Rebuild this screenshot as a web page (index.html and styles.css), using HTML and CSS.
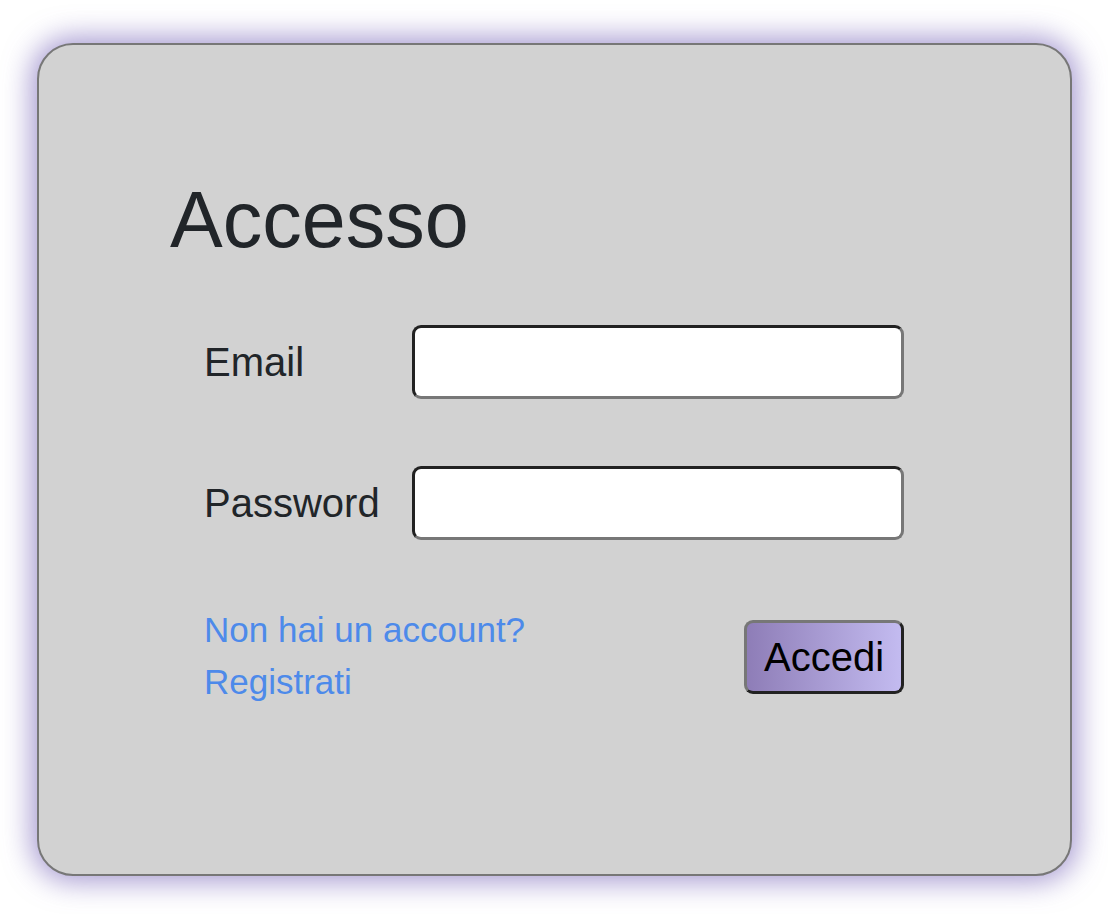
FILE: index.html
```html
<!DOCTYPE html>
<html lang="it">
<head>
<meta charset="utf-8">
<title>Accesso</title>
<link rel="stylesheet" href="styles.css">
</head>
<body>
<div class="card">
  <h1 class="title">Accesso</h1>
  <form class="form">
    <div class="row">
      <label class="label" for="email">Email</label>
      <input class="field" id="email" type="email">
    </div>
    <div class="row row-second">
      <label class="label" for="pw">Password</label>
      <input class="field" id="pw" type="password">
    </div>
    <div class="actions">
      <div class="links">
        <a class="link" href="#">Non hai un account?</a>
        <a class="link" href="#">Registrati</a>
      </div>
      <button class="btn" type="button">Accedi</button>
    </div>
  </form>
</div>
</body>
</html>
```

FILE: styles.css
```css
* { box-sizing: border-box; }
html, body { margin: 0; padding: 0; background: #ffffff; }
body {
  font-family: "Liberation Sans", Arial, sans-serif;
  color: #212529;
  padding: 43px 0 0 37px;
  min-height: 914px;
}
.card {
  width: 1035px;
  height: 833px;
  background: #d2d2d2;
  border: 2px solid #777777;
  border-radius: 36px;
  box-shadow: 0 0 28px 6px rgba(110, 90, 180, 0.6);
  padding: 128px 0 0 131px;
}
.title {
  margin: 0;
  font-size: 79px;
  line-height: 94px;
  height: 94px;
  font-weight: 400;
  color: #212529;
}
.form {
  margin: 58px 0 0 34px;
  width: 700px;
}
.row {
  display: flex;
  align-items: center;
}
.row-second { margin-top: 67px; }
.label {
  width: 208px;
  font-size: 40px;
  color: #212529;
}
.field {
  width: 492px;
  height: 74px;
  border: 3px solid;
  border-color: #222222 #777777 #777777 #222222;
  border-radius: 9px;
  background: #ffffff;
  margin: 0;
  padding: 0 10px;
  font-size: 30px;
}
.actions {
  margin-top: 64px;
  display: flex;
  align-items: center;
  justify-content: space-between;
}
.links {
  display: flex;
  flex-direction: column;
}
.link {
  font-size: 35px;
  line-height: 52px;
  color: #4d8aea;
  text-decoration: none;
}
.btn {
  width: 160px;
  height: 74px;
  border: 3px solid;
  border-color: #777777 #222222 #222222 #777777;
  border-radius: 9px;
  background: linear-gradient(to right, #8e7db7, #c3bbf0);
  font-family: "Liberation Sans", Arial, sans-serif;
  font-size: 40px;
  color: #000000;
  padding: 0;
  margin-top: 2px;
}
```
